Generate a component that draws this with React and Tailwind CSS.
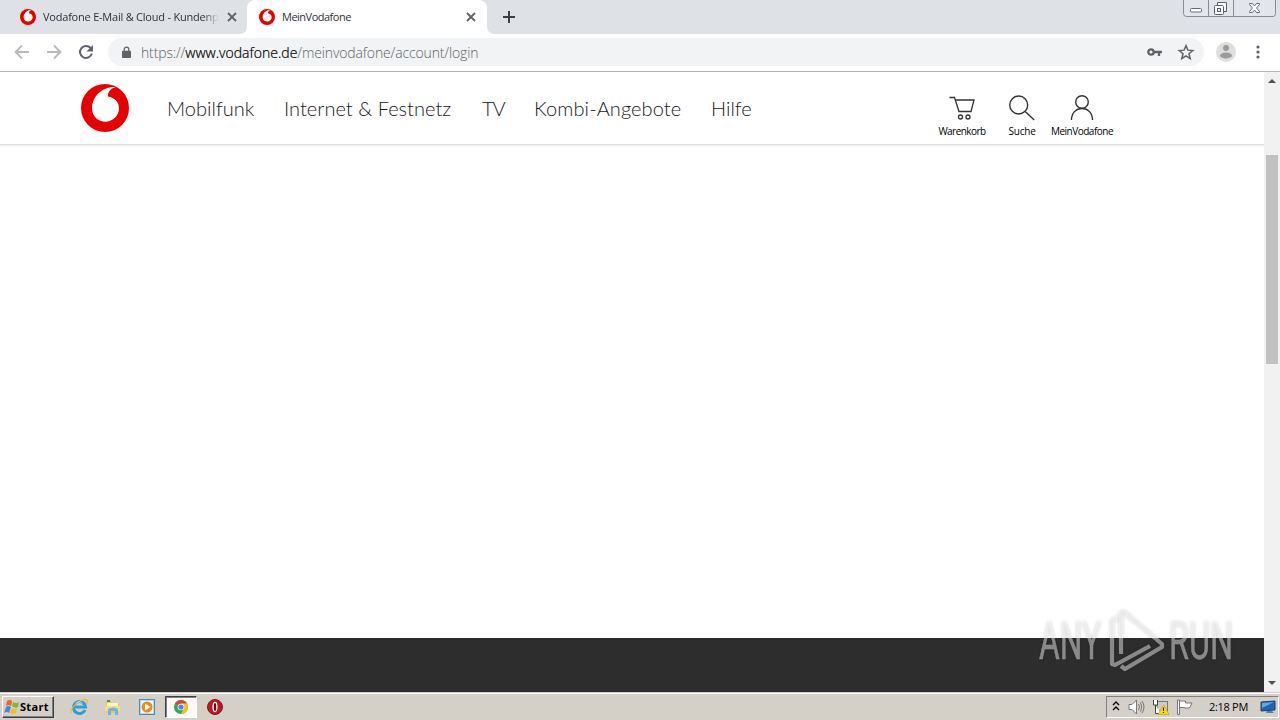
import React from "react";

function Ring({ className }) {
  return (
    <svg viewBox="0 0 48 48" className={className}>
      <circle cx="24" cy="24" r="24" fill="#e60000" />
      <path d="M35 3C22 2 11 12 11 24.500C11 32 17 37.700 24.500 37.700C32 37.700 38 31.500 38 24.500C38 17.500 33.500 13.800 27 12.500C26.500 8 30 4 35 3Z" fill="#fff" />
    </svg>
  );
}

function Close({ className }) {
  return (
    <svg viewBox="0 0 10 10" className={className} stroke="currentColor" strokeWidth="1.8">
      <path d="M1 1l8 8M9 1L1 9" />
    </svg>
  );
}

function TabBar() {
  return (
    <div className="relative flex h-[34px] bg-[#dee1e6] text-[11px] text-[#303236]">
      <div className="flex w-[247px] items-center pl-[20px]">
        <Ring className="h-4 w-4 shrink-0" />
        <span className="ml-[7px] w-[176px] whitespace-nowrap tracking-[-0.22px] [mask-image:linear-gradient(to_right,#000_91%,transparent)]">Vodafone E-Mail &amp; Cloud - Kundenpo</span>
        <Close className="ml-[8px] h-[10px] w-[10px] text-[#5f6368]" />
      </div>
      <div className="flex w-[240px] items-center rounded-t-[8px] bg-white pl-[12px]">
        <Ring className="h-4 w-4 shrink-0" />
        <span className="ml-[7px] w-[176px] whitespace-nowrap tracking-[-0.5px]">MeinVodafone</span>
        <Close className="ml-[8px] h-[10px] w-[10px] text-[#5f6368]" />
      </div>
      <svg viewBox="0 0 12 12" className="ml-[16px] mt-[11px] h-3 w-3" stroke="#3c4043" strokeWidth="2"><path d="M6 0v12M0 6h12" /></svg>
      <svg viewBox="0 0 256 8" className="absolute bottom-0 left-[239px] h-2 w-[256px]"><path d="M0 8Q8 8 8 0V8ZM256 8Q248 8 248 0V8Z" fill="#fff" /></svg>
      <svg viewBox="0 0 94 17" className="absolute right-[3px] top-0 h-[17px] w-[94px]" fill="none" stroke="#858b98">
        <path d="M.5 0V13.500Q.5 16.500 3.500 16.500H90Q92.500 16.500 92.500 13.500V0M25.500 0V16M50.500 0V16" fill="#e2e5ea" />
        <rect x="7.500" y="8.500" width="11" height="3.500" rx="1" fill="#fff" stroke="#626875" />
        <path d="M34.500 5V2.500H43.500V11.500H41" fill="#fff" stroke="#5b616e" />
        <rect x="31.500" y="5.500" width="9" height="9" rx="1" fill="#fff" stroke="#5b616e" />
        <rect x="34.500" y="8.500" width="3" height="3" stroke="#5b616e" />
        <path d="M66.500 3.500h3l2 2.500l2-2.500h3v1l-3 3.500l3 3.500v1h-3l-2-2.500l-2 2.500h-3v-1l3-3.500l-3-3.500Z" fill="#fff" stroke="#6b717d" />
      </svg>
    </div>
  );
}

function Toolbar() {
  return (
    <div className="flex h-[38px] items-center border-b border-[#b3b5b7] bg-white pb-px">
      <svg viewBox="0 0 96 20" className="ml-[10px] h-5 w-24 shrink-0" fill="none" strokeWidth="1.8" stroke="#b7b9bc">
        <path d="M19 10H6M12 3.500L5.500 10L12 16.500M37 10H50M44 3.500L50.500 10L44 16.500" />
        <path d="M80.500 6A6 6 0 1 0 81.800 11.500" stroke="#5f6368" strokeWidth="2" />
        <path d="M83 3V9.500H76.500Z" fill="#5f6368" stroke="none" />
      </svg>
      <div className="ml-[2px] flex h-7 w-[1096px] items-center rounded-full bg-[#f1f3f4] pl-[14px] pr-[9px]">
        <svg viewBox="0 0 10 14" className="h-[13px] w-[9px]"><path d="M2.500 6V3.500a2.500 2.500 0 0 1 5 0V6" fill="none" stroke="#5f6368" strokeWidth="1.400" /><rect y="5" width="10" height="8" rx="1" fill="#5f6368" /></svg>
        <span className="ml-[10px] whitespace-nowrap text-[14px] font-light tracking-[-0.14px] text-[#5f6368]"><span>https://</span><span className="tracking-[0.02px] text-black [-webkit-text-stroke:0.2px_#000]">www.vodafone.de</span>/meinvodafone/account/login</span>
        <svg viewBox="0 0 15 10" className="ml-auto h-[10px] w-[15px]" fill="none" stroke="#5f6368" strokeWidth="2.300"><circle cx="4" cy="5" r="2.700" /><path d="M6.500 5H15M12 5V9" /></svg>
        <svg viewBox="0 0 24 24" className="ml-[15px] h-[18px] w-[18px]" fill="none" stroke="#5f6368" strokeWidth="2"><path d="M12 3.500l2.500 6l6.500.5l-5 4.300l1.600 6.400L12 17.200l-5.600 3.500L8 14.300L3 10l6.500-.5Z" /></svg>
      </div>
      <svg viewBox="0 0 20 20" className="ml-[12px] h-5 w-5"><circle cx="10" cy="10" r="10" fill="#dedede" /><circle cx="10" cy="6" r="3" fill="#9b9b9b" /><ellipse cx="10" cy="13.500" rx="6" ry="3" fill="#9b9b9b" /></svg>
      <svg viewBox="0 0 4 14" className="ml-[20px] h-[14px] w-1" fill="#5f6368"><circle cx="2" cy="2" r="1.600" /><circle cx="2" cy="7" r="1.600" /><circle cx="2" cy="12" r="1.600" /></svg>
    </div>
  );
}

function Header() {
  return (
    <header className="flex h-[73px] shrink-0 border-b border-[#dedede] bg-white pl-[81px] shadow-[0_1px_2px_rgba(0,0,0,0.10)]">
      <Ring className="mt-[12px] h-12 w-12 shrink-0" />
      <nav className="ml-[38px] flex whitespace-nowrap pt-[22px] font-['Lato',sans-serif] text-[20px] font-light leading-[28px] text-[#1a1a1a]">
        <a className="w-[117px] tracking-[0px]">Mobilfunk</a>
        <a className="w-[198px] tracking-[0.03px]">Internet &amp; Festnetz</a>
        <a className="w-[52px] tracking-[-1px]">TV</a>
        <a className="w-[177px] tracking-[0.1px]">Kombi-Angebote</a>
        <a className="w-[60px] tracking-[0px]">Hilfe</a>
      </nav>
      <div className="ml-[159px] flex whitespace-nowrap pt-[22px] text-center text-[10px] leading-[12px] text-black">
        <div className="flex w-[64px] flex-col items-center">
          <svg viewBox="-0.5 0 26 28" className="h-7 w-[26px]" fill="none" stroke="#333" strokeWidth="1.300"><path d="M0 3.500H5L9.500 17.500H21.500L24.500 6H6" /><circle cx="11" cy="23" r="2" /><circle cx="18.500" cy="23" r="2" /></svg>
          <span className="mt-[3px] tracking-[-0.55px]">Warenkorb</span>
        </div>
        <div className="flex w-[56px] flex-col items-center">
          <svg viewBox="0 0 28 28" className="h-7 w-7" fill="none" stroke="#333" strokeWidth="1.400"><circle cx="10.700" cy="11" r="9" /><path d="M17.200 17.500L26.200 26" /></svg>
          <span className="mt-[3px] tracking-[-0.2px]">Suche</span>
        </div>
        <div className="flex w-[64px] flex-col items-center">
          <svg viewBox="0 0 24 28" className="h-7 w-6" fill="none" stroke="#333" strokeWidth="1.400"><circle cx="12" cy="8" r="6.300" /><path d="M1.500 26C1.500 19 6 14.500 12 14.500S22.500 19 22.500 26" /></svg>
          <span className="mt-[3px] tracking-[-0.5px]">MeinVodafone</span>
        </div>
      </div>
    </header>
  );
}

function Scrollbar() {
  return (
    <div className="flex w-4 flex-col items-center bg-[#f1f1f1]">
      <svg viewBox="0 0 16 17" className="h-[17px] w-4" fill="#505050"><path d="M4 11L8 7L12 11Z" /></svg>
      <div className="mt-[66px] h-[209px] w-3 bg-[#c1c1c1]" />
      <svg viewBox="0 0 16 17" className="mt-auto h-[17px] w-4" fill="#505050"><path d="M4 6L8 10L12 6Z" /></svg>
    </div>
  );
}

function Watermark() {
  return (
    <svg viewBox="0 0 210 76" className="absolute left-[1030px] top-[604px] h-[76px] w-[210px] overflow-visible [filter:drop-shadow(0_0_1.5px_rgba(0,0,0,0.4))]">
      <g opacity=".46">
        <g fill="#fff" stroke="#fff" strokeWidth=".5" fontFamily="Roboto, sans-serif" fontSize="52">
          <text x="9" y="55" textLength="62" lengthAdjust="spacingAndGlyphs">ANY</text>
          <text x="139" y="55" textLength="64" lengthAdjust="spacingAndGlyphs">RUN</text>
        </g>
        <path d="M88 14L82 17V60L85 61L120 42M91 50V9L94 8L132 40V43L95 65L91 62" fill="none" stroke="#fff" strokeWidth="4.200" strokeLinejoin="round" />
      </g>
    </svg>
  );
}

function Taskbar() {
  return (
    <div className="flex h-7 items-center border-t border-[#d4d0c8] bg-[#d4d0c8] pt-px text-[11px] text-black shadow-[inset_0_1px_0_#fff]">
      <div className="ml-[2px] flex h-[22px] w-[52px] items-center border border-b-[#404040] border-l-white border-r-[#404040] border-t-white pl-px font-bold shadow-[inset_-1px_-1px_0_#808080]">
        <svg viewBox="0 0 16 16" className="h-4 w-4 shrink-0"><path d="M3 2Q6 0 8 2L7 7Q4 5 2 7Z" fill="#ef6125" /><path d="M9 3Q12 5 15 3L14 8Q11 10 8 7Z" fill="#7dba36" /><path d="M2 8Q4 6 7 8L5 14Q3 12 0 14Z" fill="#3e8ddd" /><path d="M8 9Q11 11 13 9L12 14Q9 16 6 14Z" fill="#f7bd29" /></svg>
        <span className="tracking-[0.3px]">Start</span>
      </div>
      <svg viewBox="0 0 18 18" className="ml-[16px] h-[18px] w-[18px]" fill="none"><path d="M15 12A6 6 0 1 1 15.500 9H5" stroke="#2e9edb" strokeWidth="3" /><path d="M1 15C-1 11 12-1 17 2C18 3 17 5 16 6" stroke="#e8b93d" strokeWidth="1.300" /><path d="M5.500 5.500Q9 2 12.500 5.500" stroke="#a5dcf7" /></svg>
      <svg viewBox="0 0 18 18" className="ml-[16px] h-[18px] w-[18px]"><path d="M2 3h5l1 2h7v10H2z" fill="#eac65c" /><path d="M3 5h11v4H3z" fill="#fff5bd" /><path d="M1 8h15v5H1z" fill="#f6dc85" /><path d="M4 17v-6q5-3 10 0v6h-3v-4H7v4z" fill="#68b7df" /><path d="M3 3h3" stroke="#3aa346" strokeWidth="2" /></svg>
      <svg viewBox="0 0 18 18" className="ml-[16px] h-[18px] w-[18px]"><rect x="1.500" y="1.500" width="15" height="15" fill="#b9d8ed" stroke="#438dc5" /><rect x="3" y="3" width="12" height="12" fill="#eff7fb" /><circle cx="9" cy="9" r="5.500" fill="#f18a16" /><path d="M7 5.500L12.500 9L7 12.500Z" fill="#fff" /></svg>
      <div className="ml-[9px] flex h-[22px] w-[32px] items-center justify-center border border-b-white border-l-[#404040] border-r-white border-t-[#404040] bg-[#fbfaf8] shadow-[inset_1px_1px_0_#808080]">
        <svg viewBox="0 0 14 14" className="h-[14px] w-[14px]"><circle cx="7" cy="7" r="7" fill="#37a851" /><path d="M7 7L1 3.500A7 7 0 0 1 13 3.500H7Z" fill="#e34133" /><path d="M7 7V3.500H13A7 7 0 0 1 7 14L10 8Z" fill="#fbc116" /><circle cx="7" cy="7" r="3.300" fill="#fff" /><circle cx="7" cy="7" r="2.600" fill="#4285f4" /></svg>
      </div>
      <svg viewBox="0 0 16 16" className="ml-[10px] h-4 w-4"><circle cx="8" cy="8" r="7.500" fill="#bd1820" stroke="#84151a" /><ellipse cx="8" cy="8" rx="1.900" ry="4.700" fill="#6f080d" stroke="#fff" strokeWidth="1.300" /></svg>
      <div className="ml-auto mr-px flex h-[22px] w-[173px] items-center border border-b-white border-l-[#808080] border-r-white border-t-[#808080] pl-[5px]">
        <svg viewBox="0 0 8 12" className="h-3 w-2" fill="none" stroke="#000" strokeWidth="1.400"><path d="M1 4L4 1L7 4M1 9L4 6L7 9" /></svg>
        <svg viewBox="0 0 18 16" className="ml-[8px] h-4 w-[18px]" fill="none" stroke="#777"><path d="M1 5.500H4L8.500 1V15L4 10.500H1Z" fill="#fff" /><path d="M10.500 5Q12.500 8 10.500 11M12.500 3.500Q15 8 12.500 12.500M14 2Q18 8 14 14" /></svg>
        <svg viewBox="0 0 17 16" className="ml-[6px] h-4 w-[17px]"><rect x="5" y="2.500" width="10.500" height="9.500" fill="#ccc" stroke="#777" /><path d="M1.500 1V6H5.500V1M3.500 6V14.500H9" fill="#fff" stroke="#444" /><path d="M11.500 5.500L17 15.500H6Z" fill="#ffdc00" stroke="#b98e00" strokeWidth=".5" /><path d="M11.500 8.500V12M11.500 13V14" stroke="#222" strokeWidth="1.200" /></svg>
        <svg viewBox="0 0 17 16" className="ml-[7px] h-4 w-[17px]" fill="#fff" stroke="#777"><path d="M1.500 1V15.500H3.500V1ZM3.500 2H9.500V4H16L13.500 9H8.500V8.500H3.500Z" /></svg>
        <span className="ml-[16px] w-[42px] whitespace-nowrap tracking-[-0.3px]">2:18 PM</span>
        <svg viewBox="0 0 16 14" className="ml-[9px] h-[14px] w-4"><path d="M1 2L15 1V10L1 11Z" fill="#2463ac" stroke="#15447c" /><path d="M2 3L14 2L2 8Z" fill="#65a8df" /><path d="M7 11H12L14 13H6Z" fill="#557fb0" /></svg>
      </div>
    </div>
  );
}

export default function App() {
  return (
    <div className="relative flex h-[720px] w-[1280px] flex-col overflow-hidden bg-white font-['Open_Sans','Liberation_Sans',sans-serif]">
      <TabBar />
      <Toolbar />
      <div className="flex h-[620px]">
        <main className="flex w-[1264px] flex-col">
          <Header />
          <div className="flex-1" />
          <footer className="h-[54px] bg-[#2d2d2d]" />
        </main>
        <Scrollbar />
      </div>
      <Taskbar />
      <Watermark />
    </div>
  );
}
